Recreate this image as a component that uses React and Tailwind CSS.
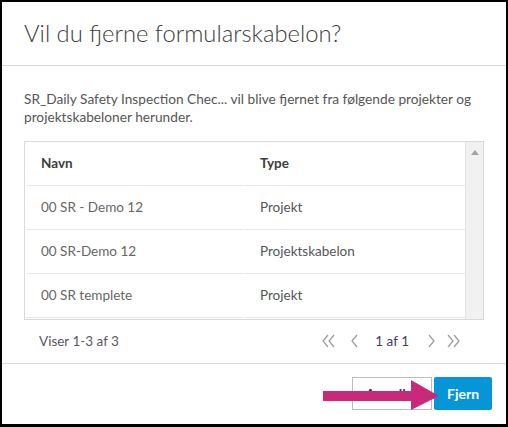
const rows = [
  { name: "00 SR - Demo 12", type: "Projekt" },
  { name: "00 SR-Demo 12", type: "Projektskabelon" },
  { name: "00 SR templete", type: "Projekt" },
  { name: "", type: "" },
]

function Cell({ children, className = "" }) {
  return (
    <div className={"h-[44px] flex items-center border-b border-[#e6e6e6] " + className}>
      {children}
    </div>
  )
}

function Chev({ double, right, className = "" }) {
  const d = double ? "M6 1 L1 7 L6 13 M12 1 L7 7 L12 13" : "M6 1 L1 7 L6 13"
  const w = double ? 13 : 7
  return (
    <svg className={className} width={w} height="14" viewBox={`0 0 ${w} 14`} style={right ? { transform: "scaleX(-1)" } : undefined}>
      <path d={d} fill="none" stroke="#9a9a9a" strokeWidth="1.2" />
    </svg>
  )
}

export default function App() {
  return (
    <div className="w-[508px] h-[427px] bg-black pt-[2px] pl-[2px] pr-[2px] pb-[3px] font-['Lato','Liberation_Sans',sans-serif]">
      <div className="relative w-[504px] h-[422px] bg-white flex flex-col">
        <div className="h-[64px] shrink-0 flex items-center px-[22px] border-b border-[#d9d9d9]">
          <h1 className="text-[23.8px] font-light text-[#3c3c3c]">Vil du fjerne formularskabelon?</h1>
        </div>

        <div className="px-[22px] pt-[24px]">
          <p className="text-[13.7px] leading-[18px] text-[#555]">
            SR_Daily Safety Inspection Chec... vil blive fjernet fra følgende projekter og projektskabeloner herunder.
          </p>

          <div className="mt-[15px] h-[179px] border border-[#d9d9d9] flex overflow-hidden">
            <div className="flex-1 overflow-hidden">
              <div className="grid grid-cols-[218px_1fr] gap-x-[1px] pl-[1px]">
                <Cell className="pl-[15px] h-[43px] text-[13.5px] font-bold text-[#3c3c3c]">Navn</Cell>
                <Cell className="pl-[15px] h-[43px] text-[13.5px] font-bold text-[#3c3c3c]">Type</Cell>
                {rows.map((r, i) => (
                  <div key={i} className="contents">
                    <Cell className="pl-[15px] text-[13.5px] text-[#666]">{r.name}</Cell>
                    <Cell className="pl-[15px] text-[13.5px] text-[#555]">{r.type}</Cell>
                  </div>
                ))}
              </div>
            </div>
            <div className="w-[18px] shrink-0 bg-[#f1f1f1] border-l border-[#e3e3e3] flex justify-center pt-[8px]">
              <svg width="8" height="5" viewBox="0 0 8 5">
                <path d="M0 5 L4 0 L8 5 Z" fill="#a3a3a3" />
              </svg>
            </div>
          </div>

          <div className="h-[42px] flex items-center justify-between pl-[15px] pr-[24px] text-[13.5px]">
            <span className="text-[#5a5560]">Viser 1-3 af 3</span>
            <div className="flex items-center">
              <Chev double />
              <Chev className="ml-[16px]" />
              <span className="ml-[17px] whitespace-nowrap text-[#4a3a5c]">1 af 1</span>
              <Chev right className="ml-[19px]" />
              <Chev double right className="ml-[12px]" />
            </div>
          </div>
        </div>

        <div className="mt-auto border-t border-[#d9d9d9] flex justify-end items-center gap-[2px] pr-[14px] pt-[13px] pb-[14px]">
          <button className="h-[33px] w-[80px] border border-[#bdbdbd] bg-white text-[14px] font-bold text-[#3c3c3c]">Annuller</button>
          <button className="h-[33px] w-[58px] bg-[#0696d7] rounded-[2px] text-[14px] font-bold text-white">Fjern</button>
        </div>

        <svg className="absolute left-[321px] top-[378px]" width="117" height="30" viewBox="0 0 117 30">
          <path d="M0 11 L88 11 L88 0 L116 16 L88 30 L88 21 L0 21 Z" fill="#c8297a" />
        </svg>
      </div>
    </div>
  )
}
